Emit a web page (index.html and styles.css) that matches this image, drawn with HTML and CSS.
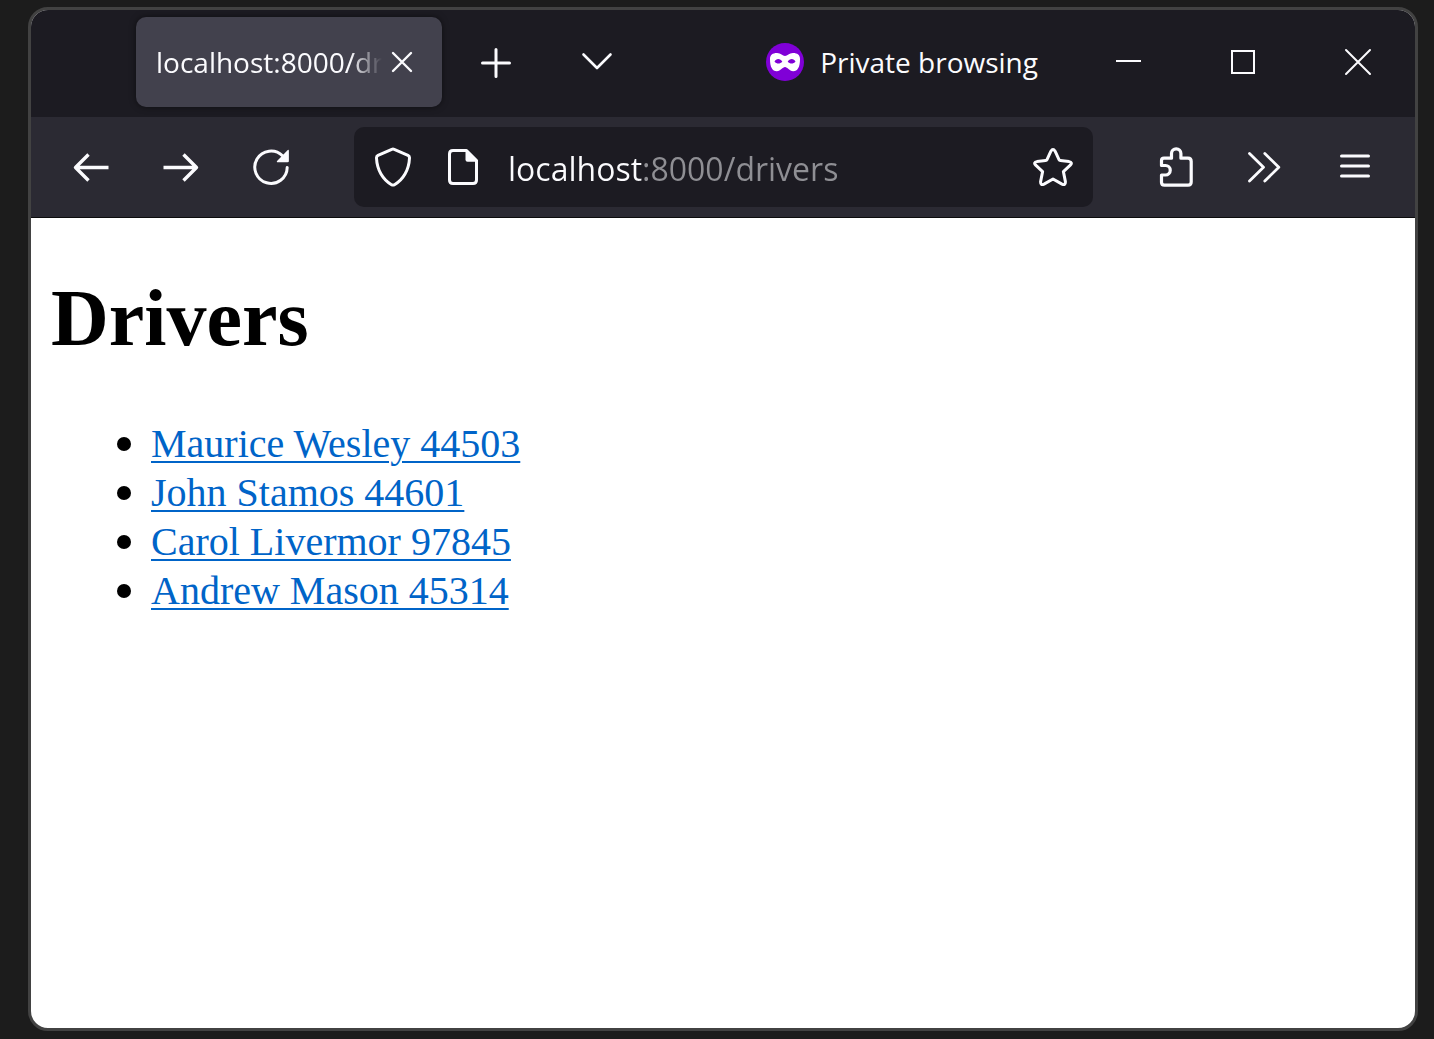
FILE: index.html
```html
<!DOCTYPE html>
<html lang="en">
<head>
<meta charset="utf-8">
<meta name="viewport" content="width=device-width, initial-scale=1">
<title>localhost:8000/drivers</title>
<link rel="stylesheet" href="styles.css">
</head>
<body class="desktop">
<div class="window">
  <header class="titlebar">
    <div class="tab">
      <span class="tab-label">localhost:8000/drivers</span>
      <button class="tab-close" type="button" aria-label="Close tab">
        <svg class="icon" viewBox="0 0 40 40"><path d="M11 11l18 18M29 11L11 29" stroke-width="2.4"/></svg>
      </button>
    </div>
    <button class="tool" type="button" aria-label="New tab">
      <svg class="icon" viewBox="0 0 40 40"><path d="M20 7.500v27M6.500 21h27" stroke-width="3"/></svg>
    </button>
    <button class="tool list-tabs" type="button" aria-label="List all tabs">
      <svg class="icon" viewBox="0 0 40 40"><path d="M6.500 12.500L20 26l13.500-13.500" stroke-width="2.6"/></svg>
    </button>
    <div class="private">
      <svg class="private-badge" viewBox="0 0 38 38" aria-hidden="true">
        <circle cx="19" cy="19" r="19" fill="#8000d7"/>
        <path fill="#fff" fill-rule="evenodd" d="M4 16c0-4 2.500-6 7-6 4 0 5.500 3 8 3s4-3 8-3c4.500 0 7 2 7 6 0 8-2.300 12.200-6.800 12.200-4 0-5.700-4.200-8.200-4.200s-4.200 4.200-8.200 4.200C6.300 28.200 4 24 4 16zM8.500 18.800c2.200 2.400 5.600 2.400 7.800 0-1.800-3.600-6.300-3.800-7.800 0zM21.700 18.800c2.200 2.400 5.600 2.400 7.800 0-1.500-3.800-6-3.600-7.800 0z"/>
      </svg>
      <span>Private browsing</span>
    </div>
    <div class="window-controls">
      <button class="control" type="button" aria-label="Minimize">
        <svg class="icon" viewBox="0 0 40 40"><path d="M8 19h25" stroke-width="2" stroke-linecap="butt"/></svg>
      </button>
      <button class="control" type="button" aria-label="Maximize">
        <svg class="icon" viewBox="0 0 40 40"><path d="M9 9h22v22H9z" stroke-width="2" stroke-linejoin="miter"/></svg>
      </button>
      <button class="control" type="button" aria-label="Close">
        <svg class="icon" viewBox="0 0 40 40"><path d="M8 8l24 24M32 8L8 32" stroke-width="2"/></svg>
      </button>
    </div>
  </header>

  <nav class="toolbar" aria-label="Navigation">
    <button class="tool" type="button" aria-label="Back">
      <svg class="icon" viewBox="0 0 40 40"><path d="M37.500 20.500H5M17.500 7.500l-13 13 13 13" stroke-width="3.400" stroke-linecap="butt"/></svg>
    </button>
    <button class="tool" type="button" aria-label="Forward">
      <svg class="icon" viewBox="0 0 40 40"><path d="M2.500 20.500H35M22.500 7.500l13 13-13 13" stroke-width="3.400" stroke-linecap="butt"/></svg>
    </button>
    <button class="tool" type="button" aria-label="Reload">
      <svg class="icon" viewBox="0 0 40 40"><path d="M36.200 20.500A16.200 16.200 0 1 1 31.500 8.800" stroke-width="3"/><path class="solid" d="M36.300 3.400Q37.900 2 37.900 4V14Q37.900 15.200 36.600 15.200H27Q25 15.200 26.300 13.700z"/></svg>
    </button>
    <form class="urlbar">
      <button class="url-button" type="button" aria-label="Tracking protection">
        <svg class="icon" viewBox="0 0 40 40"><path d="M18.800 2.300Q20 1.800 21.200 2.300L35 8.400Q36.600 9.200 36.500 11C36 23 30 33 21.500 37.700Q20 38.500 18.500 37.700C10 33 4 23 3.500 11Q3.400 9.200 5 8.400z" stroke-width="3"/></svg>
      </button>
      <button class="url-button" type="button" aria-label="Site information">
        <svg class="icon" viewBox="0 0 40 40"><path d="M10 3.500H23.500L33.500 13.500V33Q33.500 36.500 30 36.500H10Q6.500 36.500 6.500 33V7Q6.500 3.500 10 3.500z" stroke-width="3"/><path class="solid" d="M22.500 3L34 14.800H24.500Q22.500 14.800 22.500 12.800z"/></svg>
      </button>
      <input class="url" type="text" value="localhost:8000/drivers" aria-label="Address" spellcheck="false">
      <button class="url-button" type="button" aria-label="Bookmark this page">
        <svg class="icon" viewBox="0 0 40 40"><path d="M17.900 4.200Q20 .8 22.100 4.200L26 12.600Q26.400 13.400 27.400 13.500L36 14.600Q40 15.400 37.300 18.200L30.400 24.600 32.400 34.600Q32.600 38.800 29 37.100L20 32 11 37.100Q7.400 38.800 7.600 34.600L9.600 24.600 2.700 18.200Q0 15.400 4 14.600L12.600 13.500Q13.600 13.400 14 12.600z" stroke-width="3"/></svg>
      </button>
    </form>
    <button class="tool" type="button" aria-label="Extensions">
      <svg class="icon" viewBox="-1 0 40 40"><path d="M5.500 18.500V13.700Q5.500 11.200 8 11.200H15.500V6.500a4.700 4.700 0 0 1 9.400 0V11.200H32Q35.200 11.200 35.200 14.400V35Q35.200 38.200 32 38.200H8.500Q5.500 38.200 5.500 35.200V28H9.500a4.700 4.700 0 0 0 0-9.500z" stroke-width="3.200"/></svg>
    </button>
    <button class="tool" type="button" aria-label="More tools">
      <svg class="icon" viewBox="0 0 40 40"><path d="M4.500 6.500L18.500 20.300 4.500 34M19.800 6.500L33.800 20.300 19.800 34" stroke-width="2.800"/></svg>
    </button>
    <button class="tool" type="button" aria-label="Application menu">
      <svg class="icon" viewBox="0 0 40 40"><path d="M6.500 9h27M6.500 19h27M6.500 29h27" stroke-width="3"/></svg>
    </button>
  </nav>

  <main class="page">
    <h1 class="page-title">Drivers</h1>
    <ul class="drivers">
      <li><a class="driver" href="#44503">Maurice Wesley 44503</a></li>
      <li><a class="driver" href="#44601">John Stamos 44601</a></li>
      <li><a class="driver" href="#97845">Carol Livermor 97845</a></li>
      <li><a class="driver" href="#45314">Andrew Mason 45314</a></li>
    </ul>
  </main>
</div>
</body>
</html>
```
FILE: styles.css
```css
* {
  box-sizing: border-box;
}

.desktop {
  display: flex;
  min-height: 100vh;
  margin: 0;
  padding: 7px 16px 8px 28px;
  background: #1c1c1c;
}

.window {
  display: flex;
  flex: 1;
  flex-direction: column;
  min-width: 0;
  overflow: hidden;
  border: 3px solid #424242;
  border-radius: 20px;
  background: #fff;
  color: #fbfbfe;
  font-family: "Open Sans", "Noto Sans", sans-serif;
  font-size: 28px;
}

button {
  display: flex;
  flex: none;
  align-items: center;
  justify-content: center;
  padding: 0;
  border: 0;
  background: none;
  color: inherit;
}

.icon {
  width: 40px;
  height: 40px;
  fill: none;
  stroke: currentColor;
  stroke-linecap: round;
  stroke-linejoin: round;
}

.solid {
  fill: currentColor;
  stroke: none;
}

/* Title bar */
.titlebar {
  display: flex;
  align-items: center;
  padding: 7px 0 10px 105px;
  background: #1c1b22;
}

.tab {
  display: flex;
  flex: none;
  align-items: center;
  width: 306px;
  height: 90px;
  margin-right: 9px;
  padding: 0 20px;
  border-radius: 10px;
  background: #42414d;
  box-shadow: 0 0 6px rgba(0, 0, 0, 0.5);
}

.tab-label {
  flex: 1;
  overflow: hidden;
  white-space: nowrap;
  mask-image: linear-gradient(to left, transparent, #000 32px);
}

.tab-close {
  width: 40px;
  height: 40px;
}

.tool {
  width: 90px;
  height: 80px;
}

.list-tabs {
  margin-left: 11px;
}

.private {
  display: flex;
  align-items: center;
  gap: 16px;
  margin: 0 32px 0 auto;
  white-space: nowrap;
}

.private-badge {
  width: 38px;
  height: 38px;
}

.window-controls {
  display: flex;
}

.control {
  width: 115px;
  height: 90px;
}

/* Navigation toolbar */
.toolbar {
  display: flex;
  align-items: center;
  padding: 10px 15px;
  border-bottom: 1px solid #0c0c0d;
  background: #2b2a33;
}

.urlbar {
  display: flex;
  flex: 1;
  align-items: center;
  min-width: 0;
  height: 80px;
  margin: 0 37px 0 38px;
  padding: 0 5px 0 4px;
  border-radius: 10px;
  background: #1c1b22;
}

.url-button {
  width: 70px;
  height: 70px;
}

/* The host is bright and the rest of the address is dimmed. */
.url {
  flex: 1;
  min-width: 0;
  margin: 0;
  padding: 2px 0 0 10px;
  border: 0;
  outline: 0;
  background: linear-gradient(to right, #fbfbfe 144px, #8f8f94 144px);
  background-clip: text;
  color: transparent;
  font: inherit;
  font-size: 32px;
}

/* Page content */
.page {
  flex: 1;
  padding: 0 20px;
  color: #000;
  font-family: "Liberation Serif", "Times New Roman", serif;
  font-size: 40px;
}

.page-title {
  margin: 54px 0;
  font-size: 80px;
  line-height: 92px;
}

.drivers {
  margin: 0;
  padding-left: 100px;
  line-height: 47px;
}

/* The larger marker adds 2px to each line. */
.drivers li::marker {
  font-size: 46px;
}

.driver {
  color: #0064c8;
  text-decoration-thickness: 2px;
  text-underline-offset: 4px;
}
```
